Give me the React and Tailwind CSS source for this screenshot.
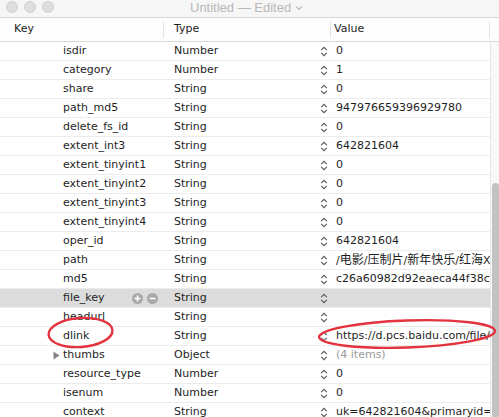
import React from "react";

const rows = [
  ["isdir", "Number", "0"],
  ["category", "Number", "1"],
  ["share", "String", "0"],
  ["path_md5", "String", "947976659396929780"],
  ["delete_fs_id", "String", "0"],
  ["extent_int3", "String", "642821604"],
  ["extent_tinyint1", "String", "0"],
  ["extent_tinyint2", "String", "0"],
  ["extent_tinyint3", "String", "0"],
  ["extent_tinyint4", "String", "0"],
  ["oper_id", "String", "642821604"],
  ["path", "String", "path"],
  ["md5", "String", "c26a60982d92eaeca44f38cb1fd2e0a1"],
  ["file_key", "String", "", "selected"],
  ["headurl", "String", ""],
  ["dlink", "String", "https://d.pcs.baidu.com/file/c26a60982d92"],
  ["thumbs", "Object", "(4 items)", "object"],
  ["resource_type", "Number", "0"],
  ["isenum", "Number", "0"],
  ["context", "String", "uk=642821604&primaryid=123456"],
];

function Stepper() {
  return (
    <svg width="8" height="11" viewBox="0 0 8 11" className="shrink-0">
      <path d="M1.2 4.2 L4 1.4 L6.8 4.2" fill="none" stroke="#5a5a5a" strokeWidth="1.2" />
      <path d="M1.2 6.8 L4 9.6 L6.8 6.8" fill="none" stroke="#5a5a5a" strokeWidth="1.2" />
    </svg>
  );
}

function Light() {
  return <div className="w-[12px] h-[12px] rounded-full bg-[#dedede] border border-[#d0d0d0]" />;
}

function PathValue() {
  return (
    <>
      /<span className="text-[12px]">电影</span>/<span className="text-[12px]">压制片</span>/
      <span className="text-[12px]">新年快乐</span>/<span className="text-[12px]">红海</span>X.2018.mkv
    </>
  );
}

export default function App() {
  return (
    <div className="relative w-[499px] h-[417px] overflow-hidden bg-white text-[11px] text-[#1e1e1e] font-['DejaVu_Sans','Noto_Sans_CJK_SC',sans-serif]">
      {/* title bar */}
      <div className="relative h-[18px] bg-[#f6f6f6] border-b border-[#d6d6d6] flex items-center">
        <div className="flex gap-[6px] pl-[6px] -mt-[3px]">
          <Light />
          <Light />
          <Light />
        </div>
        <div className="pl-[136px] -mt-[2px] text-[13px] text-[#b8b8b8] font-['Liberation_Sans',sans-serif] flex items-center gap-[4px]">
          <span>Untitled — Edited</span>
          <svg width="8" height="6" viewBox="0 0 8 6"><path d="M1 1.5 L4 4.5 L7 1.5" fill="none" stroke="#bcbcbc" strokeWidth="1.2" /></svg>
        </div>
      </div>
      {/* header */}
      <div className="h-[24px] flex border-b border-[#d8d8d8] bg-[#fdfdfd]">
        <div className="w-[164px] pl-[14px] flex items-center border-r border-[#e4e4e4] my-[3px]">Key</div>
        <div className="w-[167px] pl-[10px] flex items-center border-r border-[#e4e4e4] my-[3px]">Type</div>
        <div className="w-[159px] pl-[3px] flex items-center border-r border-[#e4e4e4] my-[3px]">Value</div>
        <div className="flex-1" />
      </div>
      {/* body */}
      <div className="flex">
        <div className="w-[490px]">
          {rows.map(([k, t, v, kind], i) => (
            <div
              key={i}
              className={
                "h-[19px] flex items-center border-b border-[#ececec] " +
                (kind === "selected" ? "bg-[#dcdcdc]" : "bg-white")
              }
            >
              <div className="w-[163px] h-full flex items-center pl-[53px] pr-[5px]">
                <div className="w-[10px] flex items-center">
                  {kind === "object" && (
                    <svg width="7" height="9" viewBox="0 0 7 9">
                      <path d="M0.5 0.5 L6.5 4.5 L0.5 8.5 Z" fill="#858585" />
                    </svg>
                  )}
                </div>
                <span className="whitespace-nowrap">{k}</span>
                {kind === "selected" && (
                  <div className="ml-auto flex gap-[4px]">
                    <div className="w-[11px] h-[11px] rounded-full bg-[#a8a8a8] flex items-center justify-center">
                      <svg width="7" height="7" viewBox="0 0 7 7"><path d="M3.5 0.5 V6.5 M0.5 3.5 H6.5" stroke="white" strokeWidth="1.6" /></svg>
                    </div>
                    <div className="w-[11px] h-[11px] rounded-full bg-[#a8a8a8] flex items-center justify-center">
                      <svg width="7" height="7" viewBox="0 0 7 7"><path d="M0.5 3.5 H6.5" stroke="white" strokeWidth="1.6" /></svg>
                    </div>
                  </div>
                )}
              </div>
              <div className="w-[165px] pl-[11px] flex items-center justify-between whitespace-nowrap">
                <span>{t}</span>
                <Stepper />
              </div>
              <div className={"w-[162px] pl-[8px] overflow-hidden whitespace-nowrap " + (kind === "object" ? "text-[#9a9a9a]" : "")}>
                {v === "path" ? <PathValue /> : v}
              </div>
            </div>
          ))}
        </div>
        {/* scrollbar */}
        <div className="w-[9px] h-[376px] bg-[#f8f8f8] border-l border-[#e6e6e6] flex flex-col pt-[141px] items-center">
          <div className="w-[7px] flex-1 rounded-full bg-[#c2c2c2]" />
        </div>
      </div>
      {/* annotations */}
      <svg className="absolute left-0 top-0 pointer-events-none" width="499" height="417" viewBox="0 0 499 417">
        <ellipse cx="80.5" cy="332.5" rx="32" ry="14.5" transform="rotate(-4 80.5 332.5)" fill="none" stroke="#e2333f" strokeWidth="2.4" />
        <ellipse cx="407" cy="334" rx="88" ry="13.5" transform="rotate(-2 407 334)" fill="none" stroke="#e2333f" strokeWidth="2.4" />
      </svg>
    </div>
  );
}
